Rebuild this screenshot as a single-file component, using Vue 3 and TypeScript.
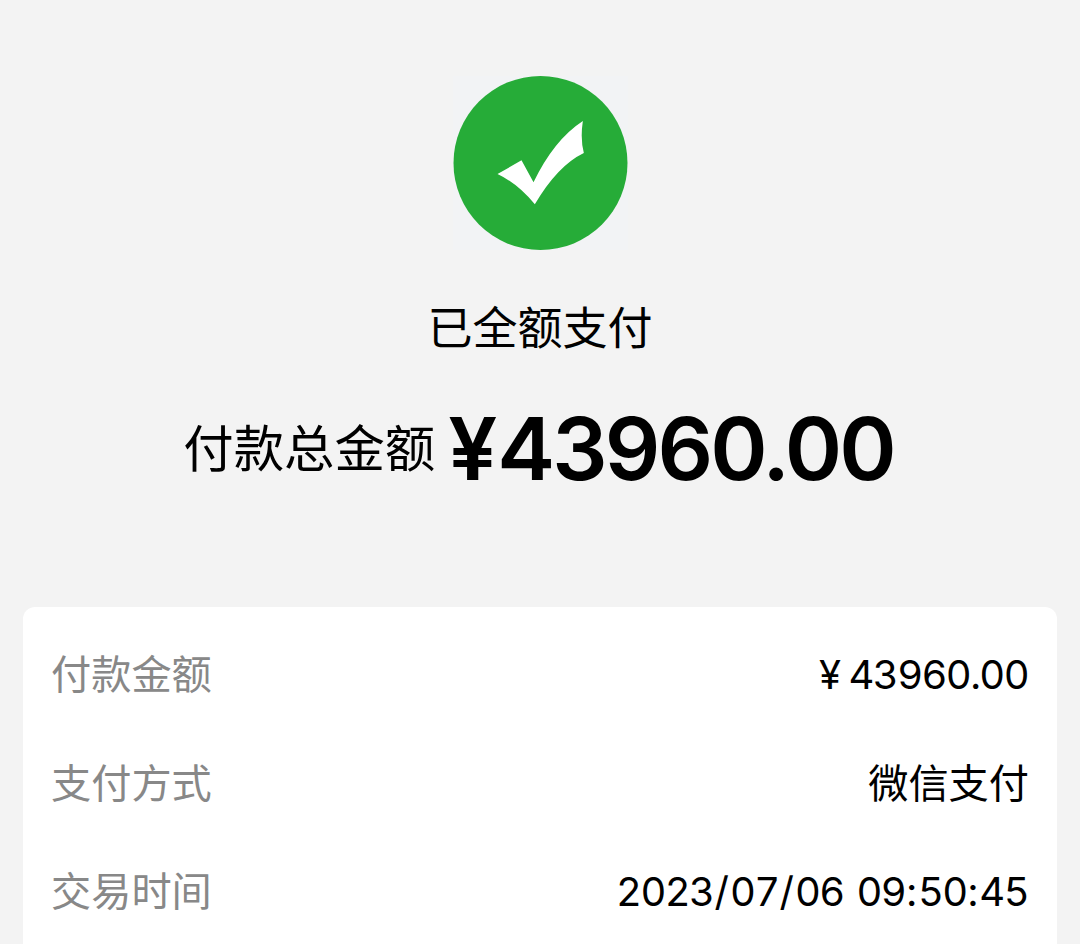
<script setup lang="ts">
interface DetailRow { label: string; value: string; money?: boolean }

const amount = '43960.00'

const rows: DetailRow[] = [
  { label: '付款金额', value: amount, money: true },
  { label: '支付方式', value: '微信支付' },
  { label: '交易时间', value: '2023/07/06 09:50:45' },
]

// separators get their own spacing, digits stay tight
function parts(value: string): string[] {
  return value.split(/([/: ])/)
}
function isSep(part: string): boolean {
  return /^[/: ]$/.test(part)
}
</script>

<template>
  <div class="pay-page">
    <header class="pay-header">
      <div class="pay-icon">
        <svg viewBox="0 0 524 522" aria-hidden="true">
          <circle cx="262" cy="261" r="261" fill="#26ac38" />
          <path
            d="M133 294 L205 253 L241 319 Q302 192 389 135 Q381 190 392 231 Q313 269 245 385 Q194 323 133 294Z"
            fill="#fff"
          />
        </svg>
      </div>
      <div class="pay-status">已全额支付</div>
      <div class="pay-total">
        <span class="pay-total-label">付款总金额</span>
        <span class="pay-total-value"><span class="pay-total-yen">¥</span>{{ amount }}</span>
      </div>
    </header>

    <section class="pay-card">
      <div v-for="row in rows" :key="row.label" class="pay-row">
        <span class="pay-label">{{ row.label }}</span>
        <span v-if="row.money" class="pay-value pay-num"><span class="pay-yen">¥</span>{{ row.value }}</span>
        <span v-else-if="/^\d/.test(row.value)" class="pay-value pay-num"><span
          v-for="(part, i) in parts(row.value)"
          :key="i"
          :class="{ 'pay-sep': isSep(part) }"
        >{{ part }}</span></span>
        <span v-else class="pay-value">{{ row.value }}</span>
      </div>
    </section>
  </div>
</template>

<style>
body { background: #f3f3f3; }
</style>

<style scoped>
.pay-page {
  height: 944px;
  overflow: hidden;
  display: flex;
  flex-direction: column;
  background: #f3f3f3;
  color: #000;
  font-family: Inter, 'Noto Sans CJK SC', sans-serif;
}
.pay-header {
  height: 607px;
  box-sizing: border-box;
  flex-shrink: 0;
  padding-top: 76px;
  display: flex;
  flex-direction: column;
  align-items: center;
}
.pay-icon {
  width: 175px;
  height: 174px;
  background: #f2f3f5;
}
.pay-icon svg { display: block; width: 100%; height: 100%; }
.pay-status {
  margin-top: 47px;
  font-size: 45px;
  line-height: 64px;
}
.pay-total {
  margin-top: 33px;
  padding-right: 3px;
  display: flex;
  align-items: center;
  height: 108px;
  white-space: nowrap;
}
.pay-total-label {
  padding-bottom: 6px;
  font-size: 50.4px;
}
.pay-total-value {
  margin-left: 13px;
  font-size: 87px;
  font-weight: 580;
  letter-spacing: -2.9px;
}
.pay-total-yen { letter-spacing: 0; }

.pay-card {
  flex: 1;
  margin: 0 23px;
  padding: 13px 28px 0;
  background: #fff;
  border-radius: 12px 12px 0 0;
}
.pay-row {
  display: flex;
  justify-content: space-between;
  align-items: center;
  height: 108.5px;
  font-size: 40.2px;
  line-height: 60px;
  white-space: nowrap;
}
.pay-label { color: #888; }
.pay-label,
.pay-value { padding-top: 2px; }
.pay-num {
  margin-right: 1px;
  font-size: 40px;
  font-variant-numeric: tabular-nums;
  letter-spacing: -1.6px;
}
.pay-yen { margin-right: 9px; }
.pay-sep {
  letter-spacing: 0;
  margin: 0 1px;
  white-space: pre;
}
</style>
